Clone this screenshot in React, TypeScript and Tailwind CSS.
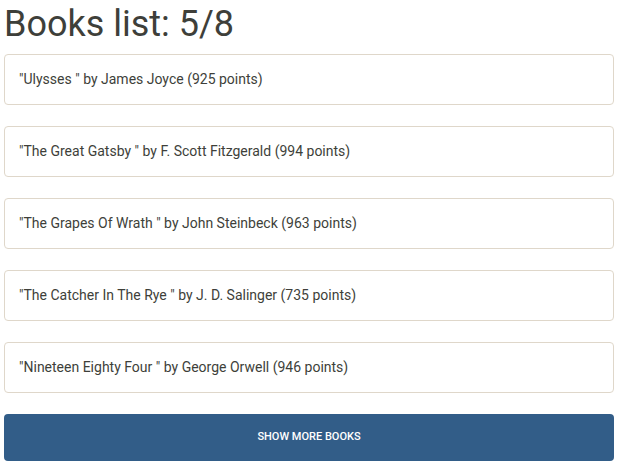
const books = [
  { title: 'Ulysses', author: 'James Joyce', points: 925 },
  { title: 'The Great Gatsby', author: 'F. Scott Fitzgerald', points: 994 },
  { title: 'The Grapes Of Wrath', author: 'John Steinbeck', points: 963 },
  { title: 'The Catcher In The Rye', author: 'J. D. Salinger', points: 735 },
  { title: 'Nineteen Eighty Four', author: 'George Orwell', points: 946 },
]

export default function App() {
  return (
    <div className="min-h-[472px] bg-white pl-[4px] pr-[6px] font-['Roboto',sans-serif] text-[#3e3f3a]">
      <h1 className="text-[36px] leading-[48px] font-normal">Books list: 5/8</h1>
      <ul className="mt-[6px] flex flex-col gap-[21px]">
        {books.map((b) => (
          <li
            key={b.title}
            className="flex h-[51px] items-center rounded-[4px] border border-[#dfd7ca] pl-[14px] text-[14px]"
          >
            "{b.title} " by {b.author} ({b.points} points)
          </li>
        ))}
      </ul>
      <button className="mt-[21px] flex h-[47px] w-full items-center justify-center rounded-[4px] bg-[#325d88] text-[11px] font-medium uppercase text-white">
        Show more books
      </button>
    </div>
  )
}
